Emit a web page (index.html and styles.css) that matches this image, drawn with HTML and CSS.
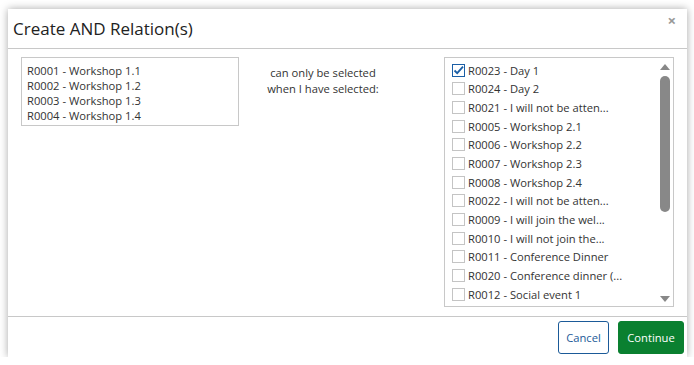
FILE: index.html
```html
<!DOCTYPE html>
<html lang="en">
<head>
  <meta charset="UTF-8">
  <title>Create AND Relation(s)</title>
  <link rel="stylesheet" href="styles.css">
</head>
<body>
  <div class="modal">
    <div class="modal-header">
      <h1>Create AND Relation(s)</h1>
      <span class="close">&times;</span>
    </div>

    <div class="modal-body">
      <ul class="source-list">
        <li>R0001 - Workshop 1.1</li>
        <li>R0002 - Workshop 1.2</li>
        <li>R0003 - Workshop 1.3</li>
        <li>R0004 - Workshop 1.4</li>
      </ul>

      <p class="relation-text">can only be selected<br>when I have selected:</p>

      <div class="target-box">
        <ul class="target-list">
          <li><span class="check checked"><svg viewBox="0 0 13 13" width="13" height="13"><path d="M2.5 6.5 L5.2 9.2 L11 2.6" fill="none" stroke="#1b5fa6" stroke-width="1.8"/></svg></span>R0023 - Day 1</li>
          <li><span class="check"></span>R0024 - Day 2</li>
          <li><span class="check"></span>R0021 - I will not be atten...</li>
          <li><span class="check"></span>R0005 - Workshop 2.1</li>
          <li><span class="check"></span>R0006 - Workshop 2.2</li>
          <li><span class="check"></span>R0007 - Workshop 2.3</li>
          <li><span class="check"></span>R0008 - Workshop 2.4</li>
          <li><span class="check"></span>R0022 - I will not be atten...</li>
          <li><span class="check"></span>R0009 - I will join the wel...</li>
          <li><span class="check"></span>R0010 - I will not join the...</li>
          <li><span class="check"></span>R0011 - Conference Dinner</li>
          <li><span class="check"></span>R0020 - Conference dinner (...</li>
          <li><span class="check"></span>R0012 - Social event 1</li>
        </ul>
        <div class="scrollbar">
          <span class="arrow up"></span>
          <span class="thumb"></span>
          <span class="arrow down"></span>
        </div>
      </div>
    </div>

    <div class="modal-footer">
      <button class="btn btn-cancel">Cancel</button>
      <button class="btn btn-continue">Continue</button>
    </div>
  </div>
</body>
</html>
```

FILE: styles.css
```css
body {
  margin: 0;
  background-color: #fff;
  font-family: "Open Sans", Arial, sans-serif;
  font-size: 11.2px;
  color: #333;
}
ul {
  list-style: none;
  margin: 0;
  padding: 0;
}
.modal {
  width: 679px;
  height: 348px;
  margin: 9px 0 0 8px;
  background-color: #fff;
  box-shadow: 0 0 8px rgba(0, 0, 0, 0.35);
  display: flex;
  flex-direction: column;
}
.modal-header {
  height: 39px;
  padding: 0 13px 0 5px;
  border-bottom: 1px solid #c8c8c8;
  display: flex;
  align-items: center;
  justify-content: space-between;
}
.modal-header h1 {
  margin: 0;
  font-size: 17px;
  font-weight: 400;
  color: #222;
}
.close {
  font-size: 15px;
  font-weight: 700;
  color: #999;
  margin-top: -18px;
  margin-right: -2px;
}
.modal-body {
  flex: 1;
  padding: 8px 13px 0;
  display: flex;
  align-items: flex-start;
}
.source-list {
  width: 218px;
  height: 69px;
  box-sizing: border-box;
  border: 1px solid #c8c8c8;
  padding: 5px 5px;
  line-height: 15px;
}
.relation-text {
  width: 168px;
  margin: 8px 0 0;
  text-align: center;
  line-height: 16px;
}
.target-box {
  margin-left: auto;
  width: 230px;
  height: 250px;
  box-sizing: border-box;
  border: 1px solid #c8c8c8;
  display: flex;
  overflow: hidden;
}
.target-list {
  flex: 1;
  padding: 3px 0 0 7px;
}
.target-list li {
  height: 18.67px;
  display: flex;
  align-items: center;
  white-space: nowrap;
}
.check {
  width: 13px;
  height: 13px;
  box-sizing: border-box;
  border: 1px solid #c4c4c4;
  margin-right: 3px;
  flex-shrink: 0;
  display: flex;
}
.check svg {
  margin: -1px;
}
.check.checked {
  border-color: #1b5fa6;
}
.scrollbar {
  width: 17px;
  display: flex;
  flex-direction: column;
  align-items: center;
  padding: 6px 0 4px;
}
.arrow {
  width: 0;
  height: 0;
  border-left: 5px solid transparent;
  border-right: 5px solid transparent;
}
.arrow.up {
  border-bottom: 6px solid #888;
}
.arrow.down {
  border-top: 6px solid #888;
  margin-top: auto;
}
.thumb {
  width: 10px;
  height: 136px;
  margin-top: 6px;
  border-radius: 5px;
  background-color: #888;
}
.modal-footer {
  height: 41px;
  border-top: 1px solid #c8c8c8;
  padding: 4px 3px 0 0;
  box-sizing: border-box;
  display: flex;
  justify-content: flex-end;
  align-items: flex-start;
  gap: 9px;
}
.btn {
  height: 33px;
  font-family: "Open Sans", Arial, sans-serif;
  font-size: 11.2px;
  border-radius: 3px;
  padding: 0;
  cursor: pointer;
}
.btn-cancel {
  width: 51px;
  background-color: #fff;
  border: 1px solid #1b5a98;
  color: #1b5a98;
}
.btn-continue {
  width: 66px;
  background-color: #0a8030;
  border: 1px solid #0a8030;
  color: #fff;
}
```
